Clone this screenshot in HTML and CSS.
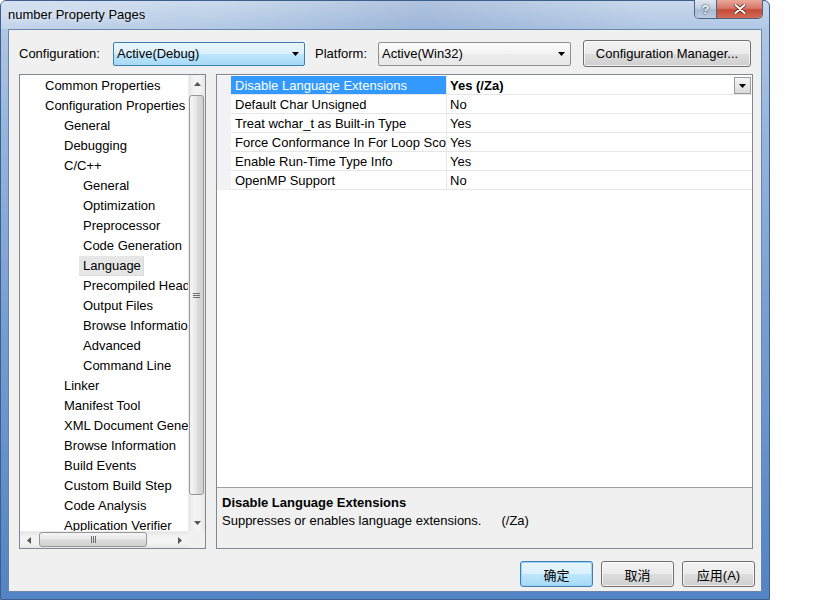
FILE: index.html
```html
<!DOCTYPE html>
<html lang="en">
<head>
    <meta charset="UTF-8">
    <title>number Property Pages</title>
    <link rel="stylesheet" href="styles.css">
</head>
<body>
    <div class="window">
        <div class="titlebar">
            <span class="title">number Property Pages</span>
            <div class="caption-buttons">
                <span class="cap-btn cap-help">?</span>
                <span class="cap-btn cap-close">
                    <svg width="12" height="10" viewBox="0 0 12 10"><path d="M1.5 1 L10.5 9 M10.5 1 L1.5 9" stroke="#5a1a10" stroke-width="3.4" stroke-linecap="round"/><path d="M1.5 1 L10.5 9 M10.5 1 L1.5 9" stroke="#fff" stroke-width="2" stroke-linecap="round"/></svg>
                </span>
            </div>
        </div>

        <div class="client">
            <div class="toolbar">
                <label class="tb-label cfg-label">Configuration:</label>
                <div class="combo combo-hot cfg-combo">
                    <span class="combo-text">Active(Debug)</span>
                    <svg class="combo-arrow" width="7" height="4" viewBox="0 0 7 4"><path d="M0 0 H7 L3.5 4 Z" fill="#000"/></svg>
                </div>
                <label class="tb-label plat-label">Platform:</label>
                <div class="combo plat-combo">
                    <span class="combo-text">Active(Win32)</span>
                    <svg class="combo-arrow" width="7" height="4" viewBox="0 0 7 4"><path d="M0 0 H7 L3.5 4 Z" fill="#000"/></svg>
                </div>
                <button class="btn cfg-mgr">Configuration Manager...</button>
            </div>

            <div class="main">
                <div class="tree-panel">
                    <ul class="tree">
                        <li class="l0">Common Properties</li>
                        <li class="l0">Configuration Properties</li>
                        <li class="l1">General</li>
                        <li class="l1">Debugging</li>
                        <li class="l1">C/C++</li>
                        <li class="l2">General</li>
                        <li class="l2">Optimization</li>
                        <li class="l2">Preprocessor</li>
                        <li class="l2">Code Generation</li>
                        <li class="l2"><span class="selected">Language</span></li>
                        <li class="l2">Precompiled Headers</li>
                        <li class="l2">Output Files</li>
                        <li class="l2">Browse Information</li>
                        <li class="l2">Advanced</li>
                        <li class="l2">Command Line</li>
                        <li class="l1">Linker</li>
                        <li class="l1">Manifest Tool</li>
                        <li class="l1">XML Document Generator</li>
                        <li class="l1">Browse Information</li>
                        <li class="l1">Build Events</li>
                        <li class="l1">Custom Build Step</li>
                        <li class="l1">Code Analysis</li>
                        <li class="l1">Application Verifier</li>
                    </ul>

                    <div class="vscroll">
                        <div class="sb-arrow"><svg width="7" height="4" viewBox="0 0 7 4"><path d="M0 4 H7 L3.5 0 Z" fill="#555"/></svg></div>
                        <div class="thumb vthumb">
                            <svg width="7" height="7" viewBox="0 0 7 7"><path d="M0 1.5 H7 M0 3.5 H7 M0 5.5 H7" stroke="#6d6d6d" stroke-width="1"/></svg>
                        </div>
                        <div class="sb-fill"></div>
                        <div class="sb-arrow"><svg width="7" height="4" viewBox="0 0 7 4"><path d="M0 0 H7 L3.5 4 Z" fill="#555"/></svg></div>
                    </div>

                    <div class="hscroll">
                        <div class="sb-arrow"><svg width="4" height="7" viewBox="0 0 4 7"><path d="M4 0 V7 L0 3.5 Z" fill="#555"/></svg></div>
                        <div class="thumb hthumb">
                            <svg width="7" height="7" viewBox="0 0 7 7"><path d="M1.5 0 V7 M3.5 0 V7 M5.5 0 V7" stroke="#6d6d6d" stroke-width="1"/></svg>
                        </div>
                        <div class="sb-fill"></div>
                        <div class="sb-arrow"><svg width="4" height="7" viewBox="0 0 4 7"><path d="M0 0 V7 L4 3.5 Z" fill="#555"/></svg></div>
                    </div>

                    <div class="sb-corner"></div>
                </div>

                <div class="prop-panel">
                    <div class="grid">
                        <div class="row">
                            <div class="gutter"></div>
                            <div class="name selected-name">Disable Language Extensions</div>
                            <div class="value">
                                <span class="value-text bold">Yes (/Za)</span>
                                <span class="drop-btn"><svg width="7" height="4" viewBox="0 0 7 4"><path d="M0 0 H7 L3.5 4 Z" fill="#000"/></svg></span>
                            </div>
                        </div>
                        <div class="row">
                            <div class="gutter"></div>
                            <div class="name">Default Char Unsigned</div>
                            <div class="value"><span class="value-text">No</span></div>
                        </div>
                        <div class="row">
                            <div class="gutter"></div>
                            <div class="name">Treat wchar_t as Built-in Type</div>
                            <div class="value"><span class="value-text">Yes</span></div>
                        </div>
                        <div class="row">
                            <div class="gutter"></div>
                            <div class="name">Force Conformance In For Loop Scope</div>
                            <div class="value"><span class="value-text">Yes</span></div>
                        </div>
                        <div class="row">
                            <div class="gutter"></div>
                            <div class="name">Enable Run-Time Type Info</div>
                            <div class="value"><span class="value-text">Yes</span></div>
                        </div>
                        <div class="row">
                            <div class="gutter"></div>
                            <div class="name">OpenMP Support</div>
                            <div class="value"><span class="value-text">No</span></div>
                        </div>
                    </div>
                    <div class="desc">
                        <div class="desc-title">Disable Language Extensions</div>
                        <div class="desc-text">Suppresses or enables language extensions.<span class="desc-switch">(/Za)</span></div>
                    </div>
                </div>
            </div>

            <div class="buttons">
                <button class="btn dlg-btn default-btn">确定</button>
                <button class="btn dlg-btn">取消</button>
                <button class="btn dlg-btn">应用(A)</button>
            </div>
        </div>
    </div>
</body>
</html>
```

FILE: styles.css
```css
* {
    box-sizing: border-box;
    margin: 0;
    padding: 0;
}

body {
    width: 819px;
    height: 601px;
    background: white;
    font-family: "Liberation Sans", "Noto Sans CJK SC", sans-serif;
    font-size: 13px;
    color: black;
    overflow: hidden;
}

.window {
    width: 770px;
    height: 600px;
    border: 1px solid #3d5f8c;
    border-radius: 6px 6px 0 0;
    padding: 0 7px 7px 7px;
    display: flex;
    flex-direction: column;
    background: linear-gradient(180deg, #cad9ec 0px, #b0c7e4 28px, #98b6de 120px, #779ed2 320px, #5283c4 600px);
}

/* title bar */
.titlebar {
    height: 28px;
    display: flex;
    align-items: flex-start;
    background: linear-gradient(90deg, rgba(255, 255, 255, 0.25) 0%, rgba(255, 255, 255, 0) 30%, rgba(60, 100, 160, 0.18) 55%, rgba(255, 255, 255, 0) 85%);
    margin: 0 -7px;
    padding: 0 7px;
}

.title {
    line-height: 28px;
    font-size: 13px;
    color: #000;
    text-shadow: 0 0 6px rgba(255, 255, 255, 0.9);
}

.caption-buttons {
    margin-left: auto;
    margin-right: -1px;
    margin-top: -1px;
    display: flex;
    height: 19px;
    border: 1px solid #4d6482;
    border-top: none;
    border-radius: 0 0 5px 5px;
    overflow: hidden;
}

.cap-btn {
    display: flex;
    align-items: center;
    justify-content: center;
    height: 18px;
}

.cap-help {
    width: 22px;
    border-right: 1px solid #4d6482;
    background: linear-gradient(180deg, #dfe7f1 0%, #c2d0e2 45%, #a8bad2 55%, #bccde2 100%);
    color: #fff;
    font-weight: bold;
    font-size: 13px;
    text-shadow: 0 0 2px #2b3d55, 0 0 1px #2b3d55;
}

.cap-close {
    width: 45px;
    background: linear-gradient(180deg, #e9a899 0%, #d8786a 45%, #c44b37 55%, #d26c56 100%);
}

/* client area */
.client {
    flex: 1;
    background: #f0f0f0;
    border: 1px solid #6a86aa;
    padding: 10px 8px 4px 10px;
    display: flex;
    flex-direction: column;
}

.toolbar {
    height: 27px;
    display: flex;
    align-items: center;
}

.tb-label {
    white-space: nowrap;
}

.cfg-label {
    width: 94px;
}

.plat-label {
    width: 63px;
    margin-left: 10px;
}

.combo {
    height: 24px;
    display: flex;
    align-items: center;
    padding: 0 5px 0 3px;
    border: 1px solid #8e8f8f;
    border-radius: 2px;
    background: linear-gradient(180deg, #fbfbfb 0%, #f3f3f3 50%, #ececec 51%, #e8e8e8 100%);
}

.combo-hot {
    border-color: #3c7fb1;
    background: linear-gradient(180deg, #eaf6fd 0%, #d9f0fc 50%, #bee6fd 51%, #a7d9f5 100%);
}

.cfg-combo {
    width: 192px;
}

.plat-combo {
    width: 193px;
}

.combo-text {
    flex: 1;
}

.btn {
    font-family: "Liberation Sans", "Noto Sans CJK SC", sans-serif;
    font-size: 13px;
    color: #000;
    border: 1px solid #707070;
    border-radius: 3px;
    background: linear-gradient(180deg, #f2f2f2 0%, #ebebeb 50%, #dddddd 51%, #cfcfcf 100%);
    box-shadow: inset 0 0 0 1px rgba(255, 255, 255, 0.7);
}

.cfg-mgr {
    width: 168px;
    height: 27px;
    margin-left: 12px;
}

/* main panels */
.main {
    margin-top: 7px;
    height: 475px;
    display: flex;
    gap: 10px;
}

.tree-panel {
    width: 187px;
    border: 1px solid #828790;
    background: white;
    display: grid;
    grid-template-columns: 1fr 17px;
    grid-template-rows: 1fr 17px;
    overflow: hidden;
}

.tree {
    list-style: none;
    overflow: hidden;
    min-width: 0;
    padding-top: 1px;
}

.tree li {
    height: 20px;
    line-height: 20px;
    white-space: nowrap;
    overflow: hidden;
}

.tree .l0 { padding-left: 25px; }
.tree .l1 { padding-left: 44px; }
.tree .l2 { padding-left: 63px; }

.tree .selected {
    display: inline-block;
    line-height: 19px;
    margin-left: -4px;
    padding: 0 2px 0 4px;
    background: #e6e6e6;
    border: 1px solid #dadada;
    border-width: 0 1px 1px 0;
}

.vscroll {
    display: flex;
    flex-direction: column;
    background: linear-gradient(90deg, #e6e6e6 0%, #f3f3f3 30%, #f3f3f3 70%, #e6e6e6 100%);
    border-left: 1px solid #ececec;
}

.hscroll {
    display: flex;
    background: linear-gradient(180deg, #e6e6e6 0%, #f3f3f3 30%, #f3f3f3 70%, #e6e6e6 100%);
    border-top: 1px solid #ececec;
}

.sb-arrow {
    width: 17px;
    height: 17px;
    flex: none;
    display: flex;
    align-items: center;
    justify-content: center;
}

.vscroll .sb-arrow {
    width: 16px;
}

.hscroll .sb-arrow {
    height: 16px;
}

.sb-fill {
    flex: 1;
}

.thumb {
    flex: none;
    display: flex;
    align-items: center;
    justify-content: center;
    border: 1px solid #979797;
    border-radius: 3px;
}

.vthumb {
    height: 400px;
    margin: 3px 1px 0 0;
    background: linear-gradient(90deg, #f4f4f4 0%, #eaeaea 45%, #dcdcdc 55%, #d0d0d0 100%);
}

.hthumb {
    width: 108px;
    margin: 0 0 1px 2px;
    background: linear-gradient(180deg, #f4f4f4 0%, #eaeaea 45%, #dcdcdc 55%, #d0d0d0 100%);
}

.sb-corner {
    background: #f0f0f0;
}

.prop-panel {
    width: 537px;
    border: 1px solid #828790;
    background: white;
    display: flex;
    flex-direction: column;
}

.grid {
    flex: 1;
    padding-top: 1px;
    overflow: hidden;
}

.row {
    display: flex;
    height: 19px;
}

.gutter {
    width: 14px;
    background: #f2f2f5;
}

.name {
    width: 216px;
    padding-left: 4px;
    line-height: 19px;
    white-space: nowrap;
    overflow: hidden;
    border-right: 1px solid #e6e6e6;
    border-bottom: 1px solid #e6e6e6;
}

.selected-name {
    background: #3399ff;
    color: white;
}

.value {
    flex: 1;
    display: flex;
    align-items: flex-start;
    padding-left: 3px;
    border-bottom: 1px solid #e6e6e6;
}

.value-text {
    flex: 1;
    line-height: 19px;
}

.bold {
    font-weight: bold;
}

.drop-btn {
    width: 17px;
    height: 17px;
    margin: 1px 1px 0 0;
    display: flex;
    align-items: center;
    justify-content: center;
    border: 1px solid #9a9a9a;
    background: linear-gradient(180deg, #f6f6f6 0%, #e7e7e7 50%, #dadada 100%);
}

.desc {
    height: 61px;
    border-top: 1px solid #a0a0a0;
    background: #f0f0f0;
    padding: 6px 0 0 5px;
}

.desc-title {
    font-weight: bold;
    line-height: 18px;
}

.desc-text {
    line-height: 18px;
}

.desc-switch {
    margin-left: 20px;
}

/* dialog buttons */
.buttons {
    margin-top: 12px;
    margin-right: -2px;
    display: flex;
    justify-content: flex-end;
    gap: 8px;
}

.dlg-btn {
    width: 73px;
    height: 26px;
}

.default-btn {
    border-color: #3c7fb1;
    background: linear-gradient(180deg, #eaf6fd 0%, #d9f0fc 50%, #bee6fd 51%, #a7d9f5 100%);
    box-shadow: inset 0 0 0 1px #97d6f8;
}
```
